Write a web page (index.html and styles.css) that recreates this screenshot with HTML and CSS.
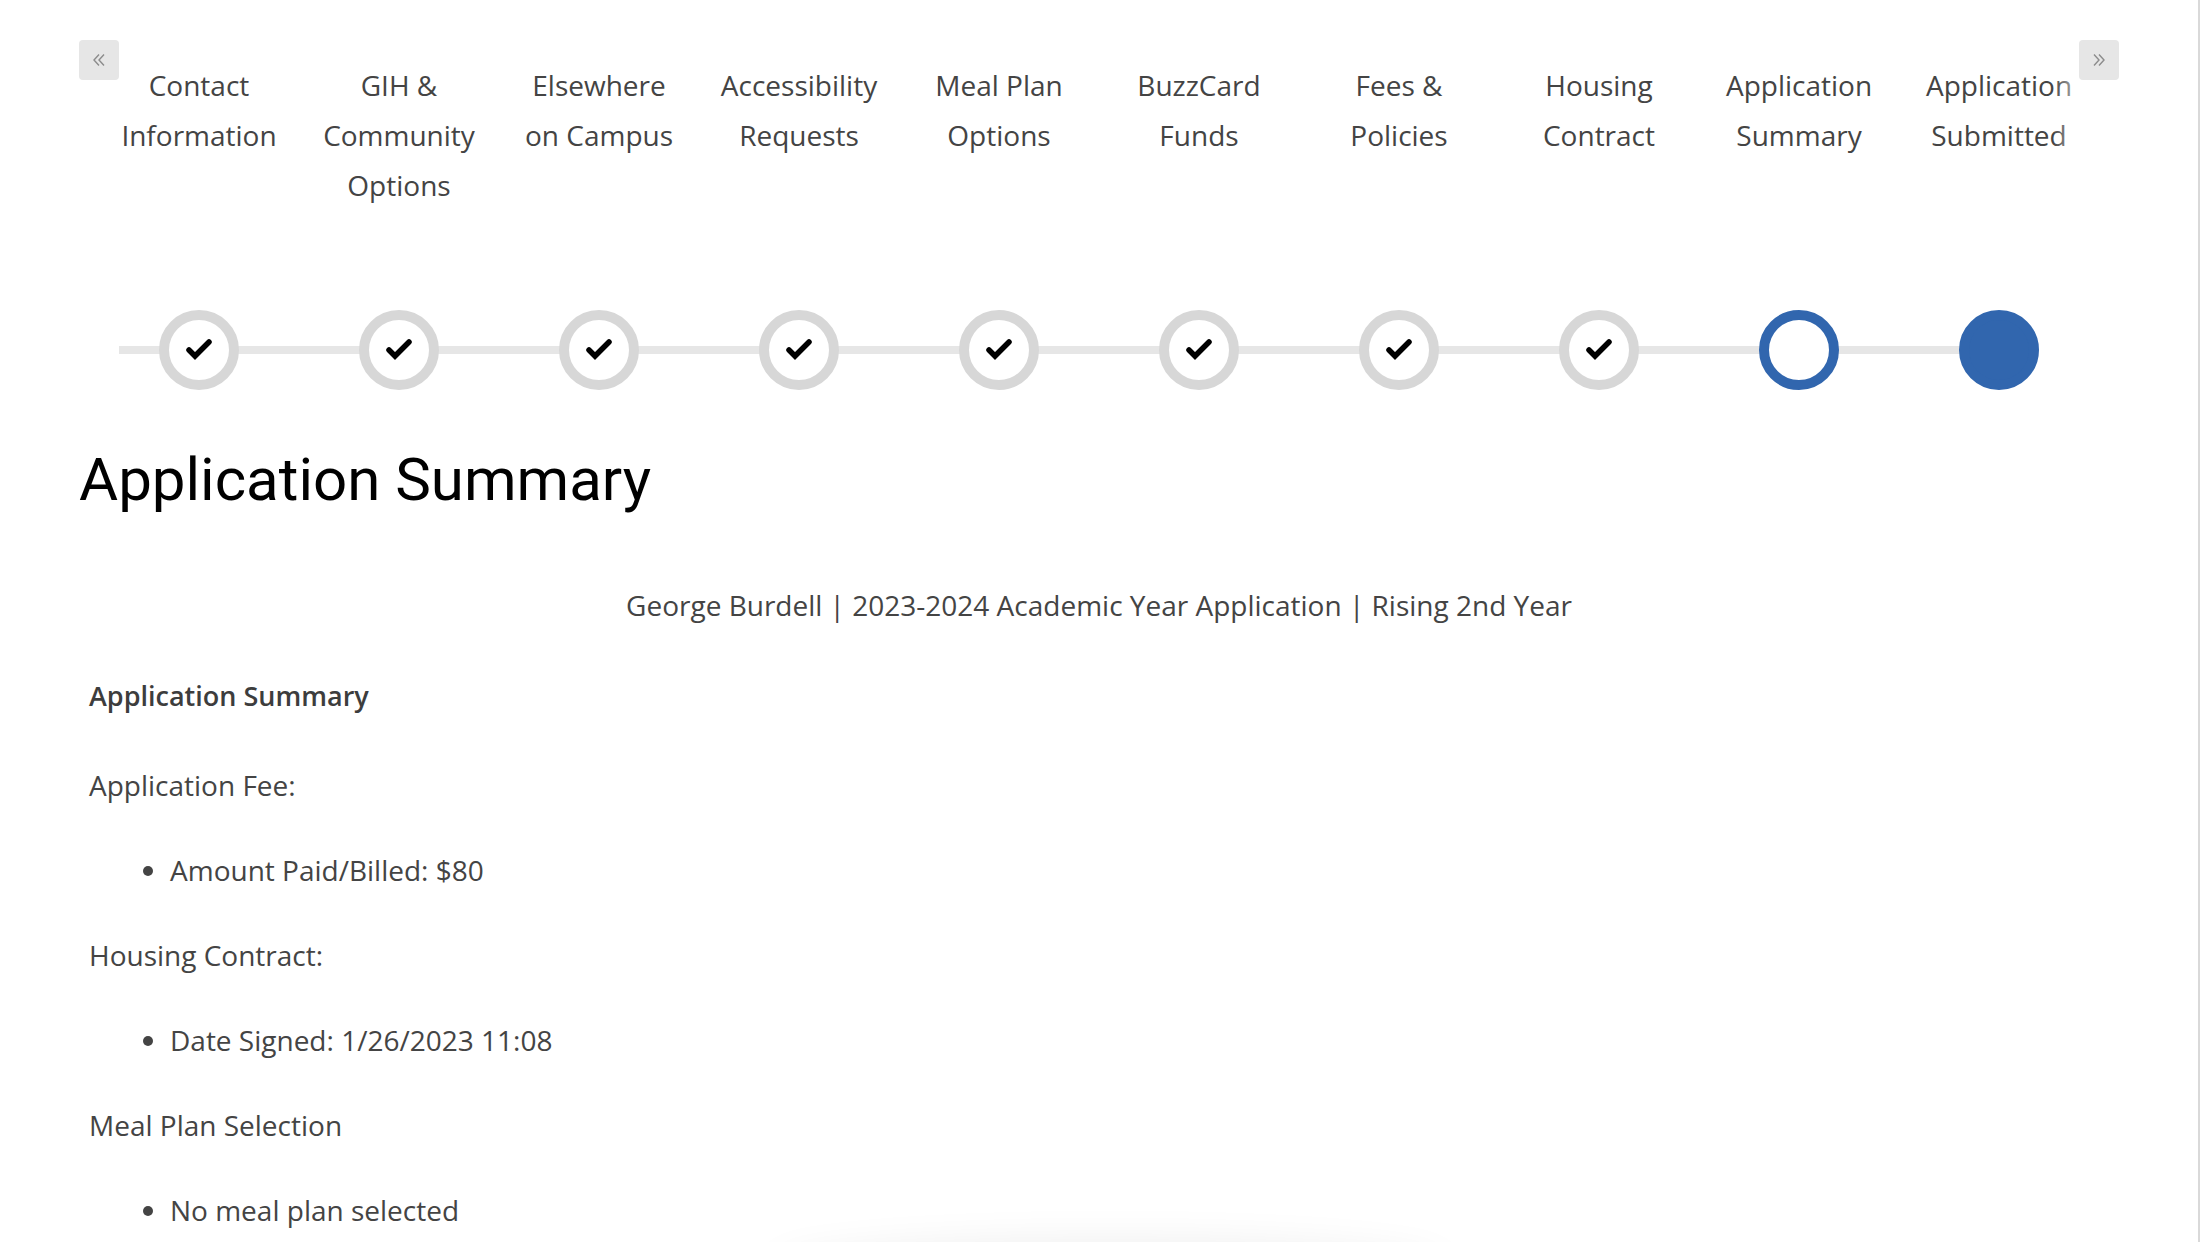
FILE: index.html
```html
<!DOCTYPE html>
<html lang="en">
<head>
    <meta charset="UTF-8">
    <meta name="viewport" content="width=device-width, initial-scale=1.0">
    <title>Application Summary - Housing Application</title>
    <link rel="stylesheet" href="styles.css">
</head>
<body>
<div class="page">

    <!-- Step wizard -->
    <div class="wizard">
        <button class="wizard-btn wizard-prev" type="button" aria-label="Previous">
            <svg width="16" height="16" viewBox="0 0 16 16"><path d="M8 2.5 L3 8 L8 13.5 M13 2.5 L8 8 L13 13.5" fill="none" stroke="#8c8c8c" stroke-width="1.4"/></svg>
        </button>
        <button class="wizard-btn wizard-next" type="button" aria-label="Next">
            <svg width="16" height="16" viewBox="0 0 16 16"><path d="M3 2.5 L8 8 L3 13.5 M8 2.5 L13 8 L8 13.5" fill="none" stroke="#8c8c8c" stroke-width="1.4"/></svg>
        </button>
        <div class="wizard-fade"></div>

        <div class="steps">
            <div class="step done">
                <div class="step-label">Contact Information</div>
                <div class="step-circle"><svg class="check" viewBox="0 0 28 22"><polyline points="4,11 10,17 24,3"/></svg></div>
            </div>
            <div class="step done">
                <div class="step-label">GIH &amp; Community Options</div>
                <div class="step-circle"><svg class="check" viewBox="0 0 28 22"><polyline points="4,11 10,17 24,3"/></svg></div>
            </div>
            <div class="step done">
                <div class="step-label">Elsewhere on Campus</div>
                <div class="step-circle"><svg class="check" viewBox="0 0 28 22"><polyline points="4,11 10,17 24,3"/></svg></div>
            </div>
            <div class="step done">
                <div class="step-label">Accessibility Requests</div>
                <div class="step-circle"><svg class="check" viewBox="0 0 28 22"><polyline points="4,11 10,17 24,3"/></svg></div>
            </div>
            <div class="step done">
                <div class="step-label">Meal Plan Options</div>
                <div class="step-circle"><svg class="check" viewBox="0 0 28 22"><polyline points="4,11 10,17 24,3"/></svg></div>
            </div>
            <div class="step done">
                <div class="step-label">BuzzCard Funds</div>
                <div class="step-circle"><svg class="check" viewBox="0 0 28 22"><polyline points="4,11 10,17 24,3"/></svg></div>
            </div>
            <div class="step done">
                <div class="step-label">Fees &amp; Policies</div>
                <div class="step-circle"><svg class="check" viewBox="0 0 28 22"><polyline points="4,11 10,17 24,3"/></svg></div>
            </div>
            <div class="step done">
                <div class="step-label">Housing Contract</div>
                <div class="step-circle"><svg class="check" viewBox="0 0 28 22"><polyline points="4,11 10,17 24,3"/></svg></div>
            </div>
            <div class="step current">
                <div class="step-label">Application Summary</div>
                <div class="step-circle"></div>
            </div>
            <div class="step next">
                <div class="step-label">Application Submitted</div>
                <div class="step-circle"></div>
            </div>
        </div>
    </div>

    <h1>Application Summary</h1>

    <p class="applicant">George Burdell | 2023-2024 Academic Year Application | Rising 2nd Year</p>

    <!-- Summary details -->
    <div class="summary">
        <p class="summary-title">Application Summary</p>

        <p>Application Fee:</p>
        <ul>
            <li>Amount Paid/Billed: $80</li>
        </ul>

        <p>Housing Contract:</p>
        <ul>
            <li>Date Signed: 1/26/2023 11:08</li>
        </ul>

        <p>Meal Plan Selection</p>
        <ul>
            <li>No meal plan selected</li>
        </ul>
    </div>
</div>

<div class="footer-shadow"></div>
<div class="page-edge"></div>
</body>
</html>
```

FILE: styles.css
```css
body {
    margin: 0;
    padding: 0;
    font-family: "Open Sans", "Liberation Sans", sans-serif;
    color: #444;
    background-color: #fff;
    overflow: hidden;
}

.page {
    width: 2040px;
    margin-left: 79px;
    padding-top: 40px;
}

/* Step wizard */
.wizard {
    position: relative;
}

.wizard-btn {
    position: absolute;
    top: 0;
    z-index: 2;
    display: flex;
    align-items: center;
    justify-content: center;
    width: 40px;
    height: 40px;
    padding: 0;
    border: none;
    border-radius: 4px;
    background-color: #e6e6e6;
    cursor: pointer;
}

.wizard-prev {
    left: 0;
}

.wizard-next {
    right: 0;
}

.wizard-fade {
    position: absolute;
    top: 20px;
    right: 40px;
    z-index: 1;
    width: 26px;
    height: 110px;
    background: linear-gradient(to right, rgba(255,255,255,0), rgba(255,255,255,0.65));
}

.steps {
    position: relative;
    display: flex;
    padding: 20px 20px 0;
}

/* connecting bar behind the circles */
.steps::before {
    content: "";
    position: absolute;
    top: 306px;
    left: 40px;
    right: 120px;
    height: 8px;
    background-color: #e6e6e6;
}

.step {
    display: flex;
    flex-direction: column;
    align-items: center;
    width: 200px;
}

.step-label {
    box-sizing: border-box;
    width: 200px;
    height: 250px;
    padding: 0 16px;
    font-size: 28px;
    line-height: 50px;
    text-align: center;
    color: #444;
}

.step-circle {
    position: relative;
    box-sizing: border-box;
    display: flex;
    align-items: center;
    justify-content: center;
    width: 80px;
    height: 80px;
    border: 10px solid #d7d7d7;
    border-radius: 50%;
    background-color: #fff;
}

.step.current .step-circle {
    border-color: #3166ae;
}

.step.next .step-circle {
    border-color: #3166ae;
    background-color: #3166ae;
}

.check {
    width: 28px;
    height: 22px;
}

.check polyline {
    fill: none;
    stroke: #000;
    stroke-width: 5.5;
    stroke-linecap: round;
    stroke-linejoin: miter;
}

h1 {
    margin: 54px 0 0;
    font-family: Roboto, "Liberation Sans", sans-serif;
    font-size: 60px;
    font-weight: 400;
    line-height: 72px;
    color: #000;
}

.applicant {
    margin: 68px 0 0;
    font-size: 28px;
    line-height: 42px;
    text-align: center;
    color: #444;
}

/* Summary details */
.summary {
    padding-left: 10px;
    margin-top: 49px;
    font-size: 28px;
    line-height: 42px;
}

.summary p {
    margin: 0 0 43px;
}

.summary .summary-title {
    margin-bottom: 47px;
    font-size: 27px;
    font-weight: 600;
    color: #3d3d3d;
}

.summary ul {
    margin: 0 0 43px;
    padding-left: 81px;
}

.footer-shadow {
    position: fixed;
    left: 770px;
    bottom: -60px;
    width: 680px;
    height: 60px;
    border-radius: 50%;
    box-shadow: 0 0 40px rgba(0, 0, 0, 0.07);
}

.page-edge {
    position: fixed;
    top: 0;
    right: 0;
    bottom: 0;
    width: 2px;
    background-color: #d9d9d9;
}
```
